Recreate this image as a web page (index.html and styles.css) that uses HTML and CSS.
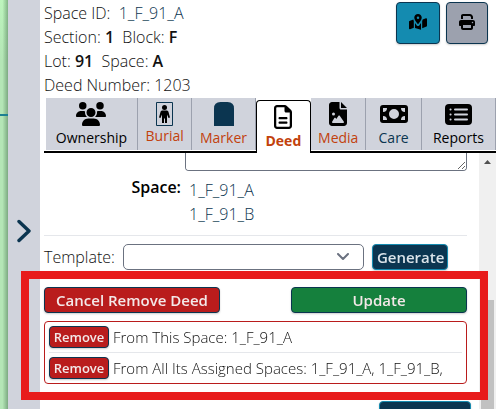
FILE: index.html
```html
<!DOCTYPE html>
<html lang="en">
<head>
<meta charset="utf-8">
<title>Space 1_F_91_A</title>
<link rel="stylesheet" href="styles.css">
</head>
<body>
<div class="app">
  <div class="map"></div>
  <button class="rail" type="button" aria-label="Expand panel">
    <svg width="14" height="24" viewBox="0 0 14 24" fill="none" stroke="#0b3550" stroke-width="3.4" stroke-linecap="round" stroke-linejoin="round"><path d="M2 2.500l10 9.500L2 21.500"/></svg>
  </button>
  <main class="panel">
    <header class="head">
      <div class="facts">
        <p>Space ID: &nbsp;<a href="#space">1_F_91_A</a></p>
        <p>Section: <b>1</b>&nbsp; Block: <b>F</b></p>
        <p>Lot: <b>91</b>&nbsp; Space: <b>A</b></p>
        <p>Deed Number: 1203</p>
      </div>
      <div class="tools">
        <button class="tool tool-map" type="button" aria-label="Show on map">
          <svg width="18" height="16" viewBox="0 0 576 512"><path d="M408 120c0 54.600-73.100 151.900-105.200 192-7.700 9.600-22 9.600-29.600 0C241.100 271.900 168 174.600 168 120 168 53.700 221.700 0 288 0s120 53.700 120 120zM288 160a40 40 0 1 0 0-80 40 40 0 1 0 0 80zM138 176c3 15 9 31 16 46v219L33 489c-16 6-33-5-33-22V245c0-10 6-19 15-22zM422 222c7-15 13-31 16-46l105-42c16-6 33 5 33 22v222c0 10-6 19-15 22l-139 56zM384 290v212l-192-55V290c19 28 39 54 55 75 21 25 61 25 82 0 16-21 36-47 55-75z"/></svg>
        </button>
        <button class="tool tool-print" type="button" aria-label="Print">
          <svg width="16" height="16" viewBox="0 0 512 512"><path fill-rule="evenodd" d="M128 0C92.700 0 64 28.700 64 64v96h64V64h226.700L384 93.300V160h64V93.300c0-17-6.700-33.300-18.700-45.300L400 18.700C388 6.700 371.700 0 354.700 0zM384 352v96H128v-96zM448 384h32c17.700 0 32-14.300 32-32v-96c0-35.300-28.700-64-64-64H64c-35.300 0-64 28.700-64 64v96c0 17.700 14.300 32 32 32h32v64c0 35.300 28.700 64 64 64h256c35.300 0 64-28.700 64-64zM432 248a24 24 0 1 1 0 48 24 24 0 1 1 0-48z"/></svg>
        </button>
      </div>
    </header>
    <nav class="tabs">
      <a class="tab tab-black" href="#ownership">
        <svg width="30" height="24" viewBox="0 0 640 512"><path d="M144 0a80 80 0 1 1 0 160A80 80 0 1 1 144 0zM512 0a80 80 0 1 1 0 160A80 80 0 1 1 512 0zM0 298.700C0 239.800 47.800 192 106.700 192h42.700c15.900 0 31 3.500 44.600 9.700-1.300 7.200-1.900 14.700-1.900 22.300 0 38.200 16.800 72.500 43.300 96H21.300C9.600 320 0 310.400 0 298.700zM405.300 320c26.600-23.500 43.300-57.800 43.300-96 0-7.600-.7-15-1.900-22.300 13.600-6.300 28.700-9.700 44.600-9.700h42.700C592.200 192 640 239.800 640 298.700c0 11.800-9.600 21.300-21.300 21.300zM224 224a96 96 0 1 1 192 0 96 96 0 1 1-192 0zM128 485.300C128 411.700 187.700 352 261.300 352h117.400C452.300 352 512 411.700 512 485.300c0 14.700-11.900 26.700-26.700 26.700H154.700c-14.700 0-26.700-11.900-26.700-26.700z"/></svg>
        <span>Ownership</span>
      </a>
      <a class="tab" href="#burial">
        <svg width="18" height="24" viewBox="0 0 18 24"><path d="M.5.5h16v23H.5z" fill="none" stroke="#0b3550"/><circle cx="8.500" cy="5.500" r="2.500"/><path d="M6.500 8.500h4c1 0 1.700.5 2 1.500l1.500 5.500-1.500.5-1.500-3.500V21H9v-4.500H8V21H6v-8.500L4.500 16 3 15.500 4.500 10c.3-1 1-1.500 2-1.500z"/></svg>
        <span>Burial</span>
      </a>
      <a class="tab" href="#marker">
        <svg width="20" height="24" viewBox="0 0 20 24"><path d="M0 24V6.500Q0 0 6.500 0h7Q20 0 20 6.500V24z" fill="#0b3550"/></svg>
        <span>Marker</span>
      </a>
      <a class="tab tab-active" href="#deed" aria-current="page">
        <svg width="18" height="24" viewBox="0 0 384 512"><path fill-rule="evenodd" d="M64 464c-8.800 0-16-7.200-16-16V64c0-8.800 7.200-16 16-16h160v80c0 17.700 14.300 32 32 32h80v288c0 8.800-7.200 16-16 16zM64 0C28.700 0 0 28.700 0 64v384c0 35.300 28.700 64 64 64h256c35.300 0 64-28.700 64-64V154.500c0-17-6.700-33.300-18.700-45.300L274.700 18.700C262.700 6.700 246.500 0 229.500 0zM120 256c-13.300 0-24 10.700-24 24s10.700 24 24 24h144c13.300 0 24-10.700 24-24s-10.700-24-24-24zM120 352c-13.300 0-24 10.700-24 24s10.700 24 24 24h144c13.300 0 24-10.700 24-24s-10.700-24-24-24z"/></svg>
        <span>Deed</span>
      </a>
      <a class="tab" href="#media">
        <svg width="18" height="24" viewBox="0 0 384 512"><path fill-rule="evenodd" d="M64 0C28.700 0 0 28.700 0 64v384c0 35.300 28.700 64 64 64h256c35.300 0 64-28.700 64-64V160H256c-17.700 0-32-14.300-32-32V0zM256 0v128h128zM64 256a32 32 0 1 1 64 0 32 32 0 1 1-64 0zM216 288c5.300 0 10.200 2.600 13.200 6.900l88 128c3.400 4.900 3.700 11.300 1 16.500S310 448 304 448H80c-5.800 0-11.100-3.100-13.900-8.100s-2.800-11.200.2-16.100l48-80c2.900-4.800 8.100-7.800 13.700-7.800s10.800 2.900 13.700 7.800l12.800 21.400 48.300-70.200c3-4.300 7.900-6.900 13.200-6.900z"/></svg>
        <span>Media</span>
      </a>
      <a class="tab tab-blue" href="#care">
        <svg width="28" height="24" viewBox="0 0 28 24"><path fill-rule="evenodd" d="M3 3h22q3 0 3 3v12q0 3-3 3H3q-3 0-3-3V6q0-3 3-3zM14 7a5 5 0 1 0 0 10 5 5 0 1 0 0-10zM3 6v4q4 0 4-4zM25 6h-4q0 4 4 4zM3 18h4q0-4-4-4zM25 18v-4q-4 0-4 4z"/></svg>
        <span>Care</span>
      </a>
      <a class="tab tab-black" href="#reports">
        <svg width="28" height="24" viewBox="0 0 28 24"><rect x="1" y="2" width="27" height="21" rx="4"/><g stroke="#d0d3dc" stroke-width="2" stroke-linecap="round"><path d="M11 7.500h12M11 12.500h12M11 17.500h12M6.500 7.500h.1M6.500 12.500h.1M6.500 17.500h.1"/></g></svg>
        <span>Reports</span>
      </a>
    </nav>
    <div class="scroller">
      <div class="content">
        <div class="field">
          <label class="field-label" for="notes"></label>
          <textarea class="notes" id="notes" aria-label="Notes"></textarea>
        </div>
        <div class="field">
          <span class="field-label">Space:</span>
          <div class="links"><a href="#a">1_F_91_A</a><a href="#b">1_F_91_B</a></div>
        </div>
        <div class="template">
          <label for="template">Template:</label>
          <select id="template"><option></option></select>
          <button class="btn btn-navy" type="button">Generate</button>
        </div>
        <section class="removal">
          <div class="actions">
            <button class="btn btn-red" type="button">Cancel Remove Deed</button>
            <button class="btn btn-green" type="button">Update</button>
          </div>
          <ul class="choices">
            <li><button class="btn btn-red btn-small" type="button">Remove</button><span>From This Space: 1_F_91_A</span></li>
            <li><button class="btn btn-red btn-small" type="button">Remove</button><span>From All Its Assigned Spaces: 1_F_91_A, 1_F_91_B,</span></li>
          </ul>
          <div class="highlight"></div>
        </section>
        <div class="media-row">
          <b>Deed Media:</b>
          <button class="btn btn-navy" type="button">New Media</button>
        </div>
      </div>
      <div class="scrollbar">
        <svg width="17" height="17" viewBox="0 0 17 17"><path d="M5 11l3.500-4 3.500 4z" fill="#505050"/></svg>
        <div class="thumb"></div>
      </div>
    </div>
  </main>
</div>
</body>
</html>
```
FILE: styles.css
```css
* {
  box-sizing: border-box;
}

body {
  margin: 0;
  font: 16px/24px "Open Sans", "Noto Sans", sans-serif;
  font-weight: 300;
  color: #111;
  background: #fff;
}

p,
ul {
  margin: 0;
  padding: 0;
  list-style: none;
}

b {
  font-weight: 600;
}

a {
  color: #0b3550;
  text-decoration: none;
}

button,
select,
textarea {
  font: inherit;
  margin: 0;
}

.app {
  display: flex;
  height: 100vh;
  overflow: hidden;
}

.map {
  width: 8px;
  background:
    linear-gradient(#1d7f92, #1d7f92) 0 114px / 8px 2px no-repeat,
    linear-gradient(90deg, transparent 30%, rgba(40, 80, 50, 0.4)),
    linear-gradient(#bdf5bd, #b4e6b6 60px);
}

.rail {
  width: 32px;
  padding: 58px 0 0;
  border: 0;
  background: #d0d3dc;
}

.panel {
  flex: 1;
  min-width: 0;
  display: flex;
  flex-direction: column;
}

.head {
  display: flex;
  justify-content: space-between;
  padding: 1px 8px 1px 4px;
}

.tools {
  display: flex;
  gap: 6px;
  margin-top: 1px;
}

.tool {
  display: flex;
  align-items: center;
  justify-content: center;
  width: 42px;
  height: 42px;
  padding: 0 0 2px;
  border: 1px solid #0b3550;
  border-radius: 4px;
  box-shadow: 0 1px 2px rgba(0, 0, 0, 0.2);
}

.tool-map {
  width: 44px;
  background: #148bb0;
}

.tool-print {
  background: #9ca1ae;
}

.tabs {
  display: flex;
  margin-left: 4px;
  padding-left: 2px;
  height: 55px;
  border-bottom: 2px solid #000;
}

.tab {
  display: flex;
  flex-direction: column;
  align-items: center;
  flex: 55 0 0;
  height: 52px;
  padding-top: 4px;
  border-right: 1px solid #9ca1ae;
  background: #d0d3dc;
  color: #c2410c;
  font-size: 14px;
  font-weight: 400;
  line-height: 24px;
}

.tab:first-child {
  flex-grow: 92;
}

.tab:nth-child(2) {
  flex-grow: 54;
  line-height: 20px;
}

.tab:nth-child(3) {
  flex-grow: 63;
}

.tab:last-child {
  flex-grow: 74;
}

.tab-black {
  color: #000;
}

.tab-blue {
  color: #0b3550;
}

.tab-active {
  flex-grow: 54;
  height: 54px;
  margin-top: 2px;
  border: 1px solid #000;
  border-bottom: 0;
  border-radius: 4px 4px 0 0;
  background: #fff;
  font-weight: 700;
}

.scroller {
  flex: 1;
  min-height: 0;
  display: flex;
}

.content {
  flex: 1;
  min-width: 0;
  padding: 0 12px 0 4px;
}

.field {
  display: flex;
  gap: 8px;
}

.field-label {
  width: 137px;
  padding-top: 4px;
  text-align: right;
  font-weight: 600;
  color: #000;
}

.notes {
  flex: 1;
  height: 18px;
  margin-left: -4px;
  border: 1px solid #6b7280;
  border-top: 0;
  border-radius: 0 0 4px 4px;
  resize: vertical;
}

.links {
  display: flex;
  flex-direction: column;
  padding-top: 7px;
}

.template {
  display: flex;
  align-items: center;
  gap: 8px;
  margin-top: 9px;
  padding-top: 8px;
  border-top: 1px solid #e5e7eb;
}

.template select {
  flex: 1;
  height: 26px;
  max-width: 241px;
  border: 1px solid #6b7280;
  border-radius: 5px;
  appearance: none;
  background: #fff url("data:image/svg+xml,%3Csvg xmlns='http://www.w3.org/2000/svg' width='12' height='8' fill='none' stroke='%236b7280' stroke-width='2' stroke-linecap='round' stroke-linejoin='round'%3E%3Cpath d='M1 1l5 5 5-5'/%3E%3C/svg%3E") no-repeat right 14px center;
}

.btn {
  height: 26px;
  padding: 0 4px;
  border: 1px solid #0b3550;
  border-radius: 4px;
  color: #f3e8e8;
  font-size: 15px;
  font-weight: 600;
  line-height: 22px;
  white-space: nowrap;
  box-shadow: 0 1px 2px rgba(0, 0, 0, 0.2);
}

.btn-navy {
  width: 76px;
  border-color: #148bb0;
  background: #0b3550;
  color: #dbe4ea;
}

.btn-red {
  background: #b91c1c;
}

.btn-green {
  background: #15803d;
}

.removal {
  position: relative;
  margin-top: 17px;
}

.actions {
  display: flex;
  justify-content: space-between;
}

.actions .btn {
  width: 176px;
}

.choices {
  margin-top: 8px;
  padding: 0 4px;
  border: 1px solid #b91c1c;
  border-radius: 4px;
  font-size: 15px;
}

.choices li {
  display: flex;
  align-items: center;
  gap: 4px;
  height: 30px;
}

.choices li + li {
  height: 31px;
  border-top: 1px solid #e5e7eb;
}

.btn-small {
  width: 60px;
  height: 22px;
  padding: 0;
  font-size: 13px;
  line-height: 18px;
}

.highlight {
  position: absolute;
  inset: -16px -21px -16px -23px;
  border: 8px solid #e81c1c;
  pointer-events: none;
  z-index: 1;
}

.media-row {
  display: flex;
  justify-content: space-between;
  margin: 17px -4px 0 20px;
}

.media-row b {
  padding-top: 2px;
}

.media-row .btn {
  width: 92px;
}

.scrollbar {
  width: 17px;
  background: #f0f0f0;
}

.scrollbar svg {
  display: block;
}

.thumb {
  width: 13px;
  height: 100%;
  margin: 130px 2px 0;
  background: #c1c1c1;
}
```
